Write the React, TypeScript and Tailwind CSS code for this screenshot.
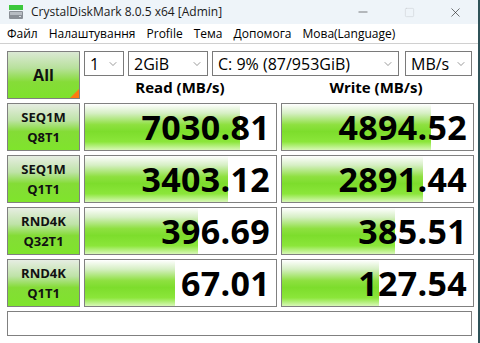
import { ChevronDown, Minus, Square, X } from 'lucide-react';

const rows = [
  { a: 'SEQ1M', b: 'Q8T1', read: '7030.81', write: '4894.52', rw: 81, ww: 78 },
  { a: 'SEQ1M', b: 'Q1T1', read: '3403.12', write: '2891.44', rw: 75, ww: 74 },
  { a: 'RND4K', b: 'Q32T1', read: '396.69', write: '385.51', rw: 59, ww: 59 },
  { a: 'RND4K', b: 'Q1T1', read: '67.01', write: '127.54', rw: 47, ww: 51 },
];

const font = { fontFamily: '"Open Sans", "Noto Sans", sans-serif' };

function DriveIcon() {
  return (
    <svg width="16" height="16" viewBox="0 0 16 16">
      <rect x="1" y="1" width="14" height="5" fill="#3cc83c" />
      <rect x="1" y="7" width="14" height="8" rx="1" fill="#8a8f96" />
      <rect x="2" y="8" width="12" height="3" fill="#b7bcc2" />
      <rect x="11" y="12" width="2" height="1" fill="#d8dde2" />
    </svg>
  );
}

function Select({ w, label }: { w: string; label: string }) {
  return (
    <div className={`${w} h-[25px] flex items-center justify-between border border-[#7a7a7a] bg-white pl-[5px] pr-[4px]`}>
      <span className="text-[16px] leading-none text-black">{label}</span>
      <ChevronDown size={12} strokeWidth={1.2} className="text-[#555]" />
    </div>
  );
}

function Cell({ value, width }: { value: string; width: number }) {
  return (
    <div className="relative h-[48px] border border-[#808080] bg-white overflow-hidden">
      <div
        className="absolute left-0 top-0 bottom-0 bg-[linear-gradient(to_bottom,#ffffff_0%,#d6efc4_20%,#8ee040_45%,#7ddd2c_60%,#8be63a_82%,#d8f8b8_100%)]"
        style={{ width: `${width}%` }}
      />
      <div className="relative h-full flex items-center justify-end pr-[6px]">
        <span className="text-[34px] font-bold leading-none text-black tracking-[0.3px]">{value}</span>
      </div>
    </div>
  );
}

function Label({ a, b }: { a: string; b: string }) {
  return (
    <div className="h-[48px] flex flex-col items-center justify-center border border-[#808080] bg-[linear-gradient(to_bottom,#e6ede2_0%,#bfe3a8_35%,#84dc36_60%,#7fe42c_100%)]">
      <span className="text-[13px] font-bold leading-[20px] text-[#111]">{a}</span>
      <span className="text-[13px] font-bold leading-[20px] text-[#111]">{b}</span>
    </div>
  );
}

export default function App() {
  return (
    <div className="w-[480px] h-[343px] flex bg-white overflow-hidden" style={font}>
      <div className="flex-1 flex flex-col">
        {/* Title bar */}
        <div className="h-[24px] flex items-center bg-[#eef4f9]">
          <div className="pl-[8px] pr-[7px] flex items-center">
            <DriveIcon />
          </div>
          <span className="text-[12px] text-[#1a1a1a]">CrystalDiskMark 8.0.5 x64 [Admin]</span>
          <div className="ml-auto flex items-center h-full">
            <div className="w-[46px] flex justify-center"><Minus size={14} strokeWidth={1} className="text-[#222]" /></div>
            <div className="w-[46px] flex justify-center"><Square size={11} strokeWidth={1} className="text-[#c4c8cc]" /></div>
            <div className="w-[46px] flex justify-center"><X size={15} strokeWidth={1} className="text-[#222]" /></div>
          </div>
        </div>

        {/* Menu */}
        <div className="h-[20px] flex items-center gap-[11px] pl-[7px] border-b border-[#d0d0d0] text-[12px] text-black">
          <span>Файл</span>
          <span>Налаштування</span>
          <span>Profile</span>
          <span>Тема</span>
          <span>Допомога</span>
          <span>Мова(Language)</span>
        </div>

        {/* Content */}
        <div className="pl-[7px] pt-[7px] flex flex-col gap-[4px]">
          <div className="flex gap-[4px]">
            <div className="relative w-[73px] h-[48px] flex items-center justify-center border border-[#808080] bg-[linear-gradient(to_bottom,#dbe9d4_0%,#b8e19c_35%,#86dc38_65%,#7ee22c_100%)]">
              <span className="text-[16px] font-bold text-[#111]">All</span>
              <div className="absolute right-0 bottom-0 w-0 h-0 border-l-[9px] border-l-transparent border-b-[9px] border-b-[#ff7a10]" />
            </div>
            <div className="flex flex-col w-[388px]">
              <div className="flex">
                <Select w="w-[40px] mr-[4px]" label="1" />
                <Select w="w-[80px] mr-[4px]" label="2GiB" />
                <Select w="w-[187px] mr-[6px]" label="C: 9% (87/953GiB)" />
                <Select w="w-[67px]" label="MB/s" />
              </div>
              <div className="flex flex-1 items-center">
                <div className="w-[193px] text-center text-[15px] font-bold text-black">Read (MB/s)</div>
                <div className="w-[193px] ml-[4px] text-center text-[15px] font-bold text-black">Write (MB/s)</div>
              </div>
            </div>
          </div>

          {rows.map((r) => (
            <div key={r.a + r.b} className="grid grid-cols-[73px_193px_193px] gap-[4px]">
              <Label a={r.a} b={r.b} />
              <Cell value={r.read} width={r.rw} />
              <Cell value={r.write} width={r.ww} />
            </div>
          ))}

          <div className="w-[465px] h-[25px] border border-[#808080] bg-white" />
        </div>
      </div>
      <div className="w-[2px] bg-[#2f5258]" />
    </div>
  );
}
